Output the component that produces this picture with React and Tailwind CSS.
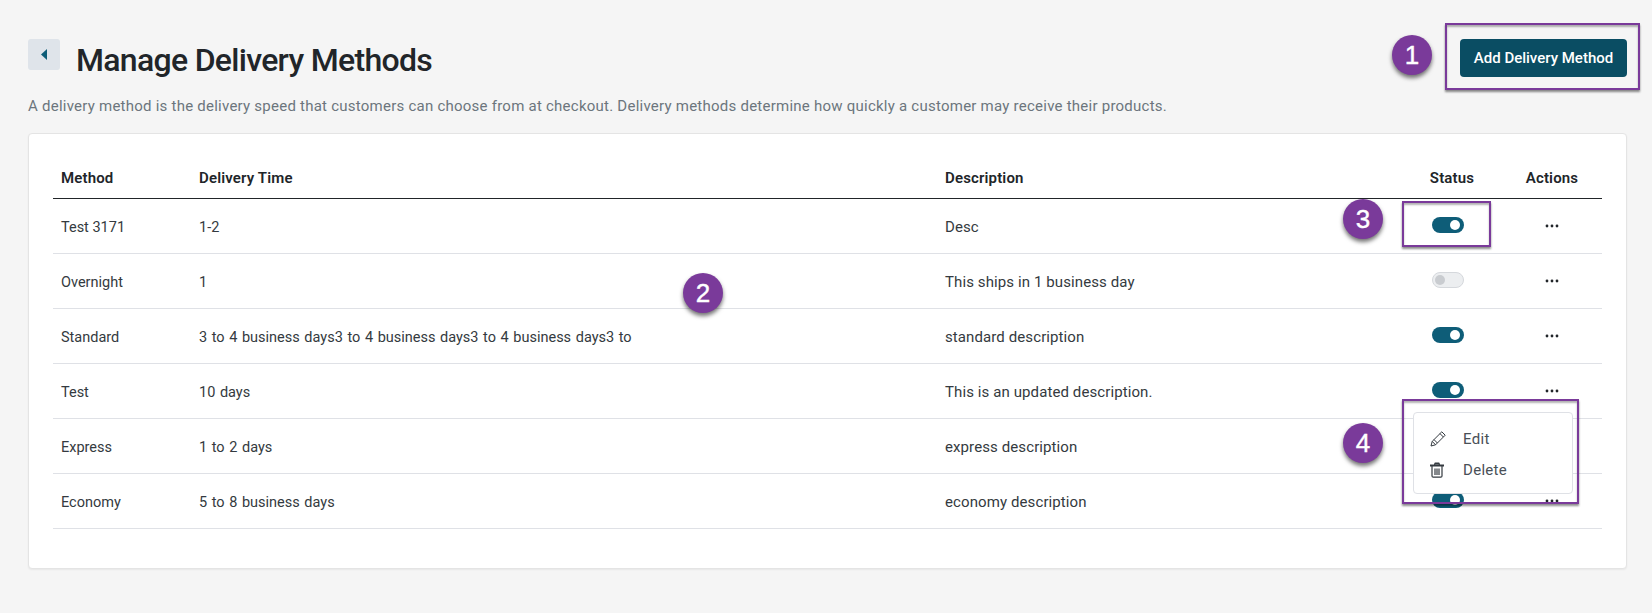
import React from 'react';

const rows = [
  { method: 'Test 3171', time: '1-2', desc: 'Desc', on: true },
  { method: 'Overnight', time: '1', desc: 'This ships in 1 business day', on: false },
  { method: 'Standard', time: '3 to 4 business days3 to 4 business days3 to 4 business days3 to', desc: 'standard description', on: true },
  { method: 'Test', time: '10 days', desc: 'This is an updated description.', on: true },
  { method: 'Express', time: '1 to 2 days', desc: 'express description', on: null },
  { method: 'Economy', time: '5 to 8 business days', desc: 'economy description', on: true },
];

const gridCols = 'grid grid-cols-[138px_746px_1fr_100px_100px] items-center';

const Toggle = ({ on }) => (
  <div className={`flex h-4 w-8 items-center rounded-full ${on ? 'justify-end bg-[#0e5d78] pr-1' : 'justify-start border border-[#d5d8dc] bg-[#eceef0] pl-0.5'}`}>
    <div className={`h-[10px] w-[10px] rounded-full ${on ? 'bg-white' : 'bg-[#c9ccd0]'}`}></div>
  </div>
);

const Dots = () => (
  <svg width="14" height="4" viewBox="0 0 14 4" fill="#212529">
    <circle cx="2" cy="2" r="1.4" />
    <circle cx="7" cy="2" r="1.4" />
    <circle cx="12" cy="2" r="1.4" />
  </svg>
);

const PencilIcon = () => (
  <svg width="17" height="17" viewBox="0 0 17 17" fill="none" stroke="#343a40" strokeWidth="1">
    <path d="M1 16l1.2-4.6L11.8 1.8l3.4 3.4-9.6 9.6z" />
    <path d="M2.2 11.4l3.4 3.4M10 3.6l3.4 3.4M4 9.6l3.4 3.4" />
  </svg>
);

const TrashIcon = () => (
  <svg width="14" height="16" viewBox="0 0 14 16" fill="none" stroke="#343a40" strokeWidth="1.2">
    <path d="M2 4v10a1.2 1.2 0 0 0 1.2 1.2h7.6A1.2 1.2 0 0 0 12 14V4" />
    <path d="M5 6.5v6.5M7 6.5v6.5M9 6.5v6.5" />
    <path d="M0.5 3h13v0.8H0.5zM4.5 2.6L5.2 1h3.6l0.7 1.6" fill="#343a40" />
  </svg>
);

const Badge = ({ n, className }) => (
  <div className={`absolute flex h-10 w-10 items-center justify-center rounded-full bg-[#7a3a9a] font-['Liberation_Sans',sans-serif] text-[26px] leading-none text-white shadow-[0_3px_4px_rgba(0,0,0,0.55)] [-webkit-text-stroke:0.4px_white] ${className}`}>
    {n}
  </div>
);

const Box = ({ className }) => (
  <div className={`pointer-events-none absolute border-2 border-[#7a3a9a] shadow-[0_2px_2px_rgba(0,0,0,0.45),inset_0_2px_2px_rgba(0,0,0,0.3)] ${className}`}></div>
);

export default function App() {
  return (
    <div className="relative h-[613px] overflow-hidden bg-[#f5f5f5] pt-[39px] pr-[25px] pl-[28px] font-['Roboto',sans-serif] text-[#212529]">
      <div className="flex items-start justify-between">
        <div className="flex items-start">
          <button className="flex h-[31px] w-8 items-center justify-center rounded-[3px] bg-[#dfe4ea]">
            <svg width="6" height="11" viewBox="0 0 6 11" fill="#0e5d78"><path d="M6 0v11L0 5.5z" /></svg>
          </button>
          <h1 className="mt-[2px] -mb-px ml-4 text-[32px] leading-[38px] font-medium tracking-[-0.7px] text-[#212529]">Manage Delivery Methods</h1>
        </div>
        <button className="h-[38px] w-[167px] rounded-[4px] bg-[#0a4d63] text-[15px] font-medium text-white">Add Delivery Method</button>
      </div>
      <p className="mt-[18px] text-[15px] leading-5 tracking-[0.24px] text-[#6c757d]">A delivery method is the delivery speed that customers can choose from at checkout. Delivery methods determine how quickly a customer may receive their products.</p>

      <div className="mt-[17px] h-[436px] rounded-[4px] border border-[#e4e4e4] bg-white px-6 pt-6 shadow-[0_1px_2px_rgba(0,0,0,0.06)]">
        <div className={`${gridCols} h-[41px] border-b border-[#212529] pt-px text-[15px] font-semibold tracking-[0.15px]`}>
          <div className="pl-2">Method</div>
          <div className="pl-2">Delivery Time</div>
          <div className="pl-2">Description</div>
          <div className="text-center">Status</div>
          <div className="text-center">Actions</div>
        </div>
        {rows.map((r) => (
          <div key={r.method} className={`${gridCols} h-[55px] border-b border-[#dfe1e6] text-[#343a40]`}>
            <div className="pt-[3px] pl-2 text-[14.5px]">{r.method}</div>
            <div className="pt-[3px] pl-2 text-[14.5px] [word-spacing:1px]">{r.time}</div>
            <div className="pt-[2px] pl-2 text-[15px] tracking-[0.1px]">{r.desc}</div>
            <div className="flex justify-center pr-2 pb-[3px]">{r.on !== null && <Toggle on={r.on} />}</div>
            <div className="flex justify-center">{r.on !== null && <Dots />}</div>
          </div>
        ))}
      </div>

      <div className="absolute top-[412px] left-[1413px] flex h-[82px] w-[160px] flex-col justify-center gap-[9px] rounded-[4px] border border-[#dfe1e6] bg-white pt-[3px] pl-4 text-[15px] tracking-[0.3px] text-[#495057]">
        <div className="flex items-center gap-4"><PencilIcon /><span>Edit</span></div>
        <div className="flex items-center gap-4"><TrashIcon /><span className="ml-[3px]">Delete</span></div>
      </div>

      <Box className="top-[23px] left-[1445px] h-[67px] w-[195px]" />
      <Box className="top-[201px] left-[1402px] h-[46px] w-[89px]" />
      <Box className="top-[399px] left-[1402px] h-[105px] w-[177px]" />
      <Badge n="1" className="top-[35px] left-[1392px]" />
      <Badge n="2" className="top-[273px] left-[683px]" />
      <Badge n="3" className="top-[199px] left-[1343px]" />
      <Badge n="4" className="top-[423px] left-[1343px]" />
    </div>
  );
}
